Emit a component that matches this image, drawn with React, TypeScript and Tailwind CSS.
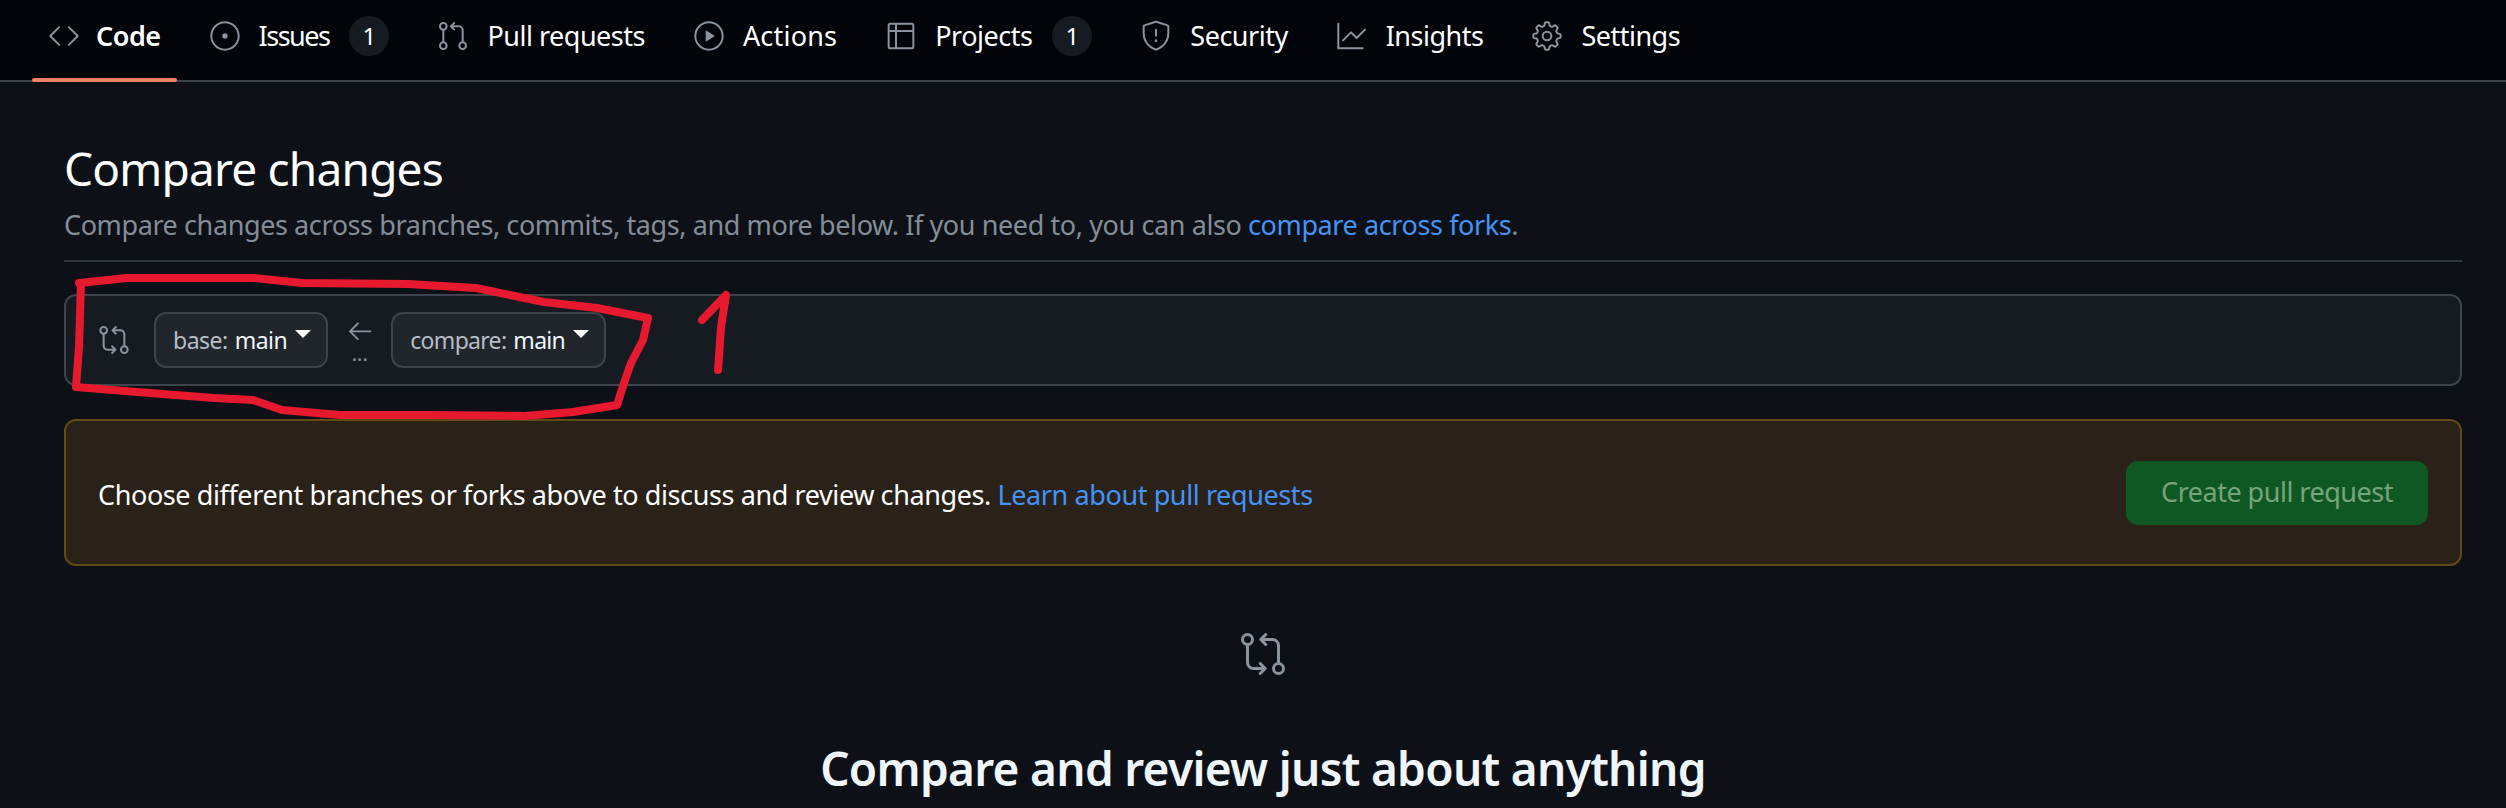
import { GoCode, GoIssueOpened, GoGitPullRequest, GoPlay, GoTable, GoShield, GoGraph, GoGear, GoGitCompare, GoArrowLeft } from "react-icons/go";
import type { ComponentType, ReactNode } from "react";

const tabs: { label: string; icon: ComponentType<{ size?: number; className?: string }>; count?: number; active?: boolean; textClass: string }[] = [
  { label: "Code", icon: GoCode, active: true, textClass: "ml-4 font-semibold tracking-[-0.5px]" },
  { label: "Issues", icon: GoIssueOpened, count: 1, textClass: "ml-[18px] tracking-[-1.5px]" },
  { label: "Pull requests", icon: GoGitPullRequest, textClass: "ml-[18px] tracking-[-0.5px]" },
  { label: "Actions", icon: GoPlay, textClass: "ml-[18px] tracking-[0.2px]" },
  { label: "Projects", icon: GoTable, count: 1, textClass: "ml-[18px] tracking-[-0.5px]" },
  { label: "Security", icon: GoShield, textClass: "ml-[18px] tracking-[-0.5px]" },
  { label: "Insights", icon: GoGraph, textClass: "ml-[18px] tracking-[-0.5px]" },
  { label: "Settings", icon: GoGear, textClass: "ml-[18px] tracking-[-0.5px]" },
];

function BranchButton({ prefix, className, children }: { prefix: string; className: string; children: ReactNode }) {
  return (
    <button className={`flex h-[56px] items-center rounded-[12px] border-2 border-[#3d444d] bg-[#21262d] pr-[15px] pl-[17px] text-[23px] ${className}`}>
      <span className="text-[#b7bdc4]">{prefix}</span>
      <span className="ml-[7px] text-[#f0f6fc]">{children}</span>
      <span className="mb-[12px] ml-[8px] h-0 w-0 border-x-[8px] border-t-[8px] border-x-transparent border-t-white" />
    </button>
  );
}

export default function App() {
  return (
    <div className="relative h-[808px] overflow-hidden bg-[#0d1117] font-['Noto_Sans',sans-serif] text-white">
      {/* Repo tabs */}
      <nav className="flex h-[82px] gap-4 border-b-2 border-[#3d444d] bg-[#010409] pl-8">
        {tabs.map((tab) => (
          <div key={tab.label} className="relative flex h-[80px] items-center px-4 pb-[8px]">
            <tab.icon size={32} className="text-[#8b949e]" />
            <span className={`text-[27px] ${tab.textClass}`}>{tab.label}</span>
            {tab.count && (
              <span className="ml-[20px] flex h-[40px] w-[40px] items-center justify-center rounded-full bg-[#161b22] text-[24px]">{tab.count}</span>
            )}
            {tab.active && <div className="absolute inset-x-0 bottom-[-2px] h-[4px] rounded-sm bg-[#f78166]" />}
          </div>
        ))}
      </nav>

      <main className="mr-[44px] ml-[64px]">
        <div className="border-b-2 border-[#30363d] pt-[56px] pb-[16px]">
          <h1 className="text-[46px] leading-[60px] tracking-[-0.8px]">Compare changes</h1>
          <p className="mt-[8px] text-[27px] leading-[38px] tracking-[-0.4px] text-[#848d97]">
            Compare changes across branches, commits, tags, and more below. If you need to, you can also{" "}
            <a className="text-[#4493f8]">compare across forks</a>.
          </p>
        </div>

        {/* Range editor */}
        <div className="mt-[32px] flex h-[92px] items-center rounded-[12px] border-2 border-[#3d444d] bg-[#161b22] pl-[32px]">
          <GoGitCompare size={32} className="text-[#8b949e]" />
          <div className="ml-[24px]">
            <BranchButton prefix="base:" className="tracking-[-0.5px]">main</BranchButton>
          </div>
          <div className="flex w-[63px] flex-col items-center">
            <GoArrowLeft size={30} className="text-[#8b949e]" />
            <span className="mt-[-2px] text-[20px] leading-[20px] text-[#8b949e]">...</span>
          </div>
          <BranchButton prefix="compare:" className="tracking-[-0.7px]">main</BranchButton>
        </div>

        {/* Flash */}
        <div className="mt-[33px] flex h-[147px] items-center justify-between rounded-[12px] border-2 border-[#614a16] bg-[#2a2218] px-[32px]">
          <p className="pt-[5px] text-[27px] tracking-[-0.4px]">
            Choose different branches or forks above to discuss and review changes.{" "}
            <a className="text-[#4493f8]">Learn about pull requests</a>
          </p>
          <button className="flex h-[64px] w-[302px] items-center justify-center rounded-[12px] bg-[#105823] text-[27px] tracking-[-0.5px] text-[#75a47d]">
            Create pull request
          </button>
        </div>

        {/* Blankslate */}
        <div className="mt-[64px] flex flex-col items-center">
          <GoGitCompare size={48} className="text-[#8b949e]" />
          <h2 className="mt-[58px] text-[46px] leading-[64px] font-semibold tracking-[-0.7px] text-[#f0f6fc]">Compare and review just about anything</h2>
        </div>
      </main>

      {/* Red pen annotation on top of the screenshot */}
      <svg className="absolute top-0 left-0" width="2506" height="808" fill="none" stroke="#e6192e" strokeWidth="8" strokeLinecap="round" strokeLinejoin="round">
        <path d="M79 283L127 278L253 278L302 283L408 284L476 288L544 302L597 308L648 318L643 340L631 363L624 383L617 405L573 412L525 416L428 415L340 415L282 410L253 400L214 398L137 392L76 387L79 347L81 283" />
        <path d="M702 320L726 295L721 327L718 370" />
      </svg>
    </div>
  );
}
